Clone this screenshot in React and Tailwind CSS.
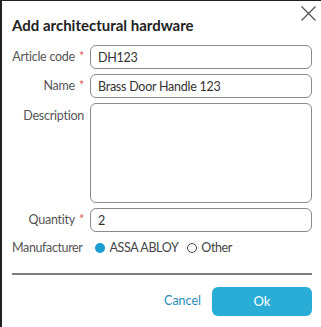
import React, { useState } from 'react'

const FONT = { fontFamily: 'Lato, "Open Sans", sans-serif' }

function Field({ label, required, children, top }) {
  return (
    <div className={`flex ${top ? 'items-start' : 'items-center'} gap-[6px]`}>
      <label
        className={`w-[72px] shrink-0 text-right text-[12.5px] tracking-[-0.02em] text-[#555] whitespace-nowrap ${top ? 'pt-[4px]' : ''}`}
      >
        {label}
        {required && <span className="text-[#e05a5a] ml-[4px]">*</span>}
      </label>
      {children}
    </div>
  )
}

export default function App() {
  const [maker, setMaker] = useState('assa')

  const inputCls =
    'flex-1 min-w-0 h-[24px] border border-[#8a8a8a] rounded-[6px] px-[7px] text-[12.5px] tracking-[-0.02em] text-[#333] outline-none'

  return (
    <div
      className="w-[321px] h-[327px] bg-white border-l-2 border-t border-[#222] pl-[10px] pr-[9px] overflow-hidden"
      style={FONT}
    >
      {/* Header */}
      <div className="flex items-start justify-between h-[44px]">
        <h1 className="mt-[14px] text-[15px] font-bold text-[#222] leading-[20px]">
          Add architectural hardware
        </h1>
        <button className="mt-[4px] -mr-[5px] text-[#555]">
          <svg width="17" height="17" viewBox="0 0 17 17" fill="none" stroke="currentColor" strokeWidth="1.3">
            <path d="M1.5 1.5 L15.5 15.5 M15.5 1.5 L1.5 15.5" />
          </svg>
        </button>
      </div>

      {/* Form */}
      <div className="flex flex-col gap-[5px]">
        <Field label="Article code" required>
          <input defaultValue="DH123" className={inputCls} />
        </Field>
        <Field label="Name" required>
          <input defaultValue="Brass Door Handle 123" className={inputCls} />
        </Field>
        <Field label="Description" top>
          <textarea className="flex-1 min-w-0 h-[100px] border border-[#8a8a8a] rounded-[6px] px-[7px] text-[12.5px] resize-none outline-none" />
        </Field>
        <Field label="Quantity" required>
          <input defaultValue="2" className={inputCls} />
        </Field>
      </div>

      {/* Manufacturer */}
      <div className="flex items-center mt-[6px] h-[20px] text-[12.5px] tracking-[-0.03em] text-[#444]">
        <span className="mr-[12px] text-[#555]">Manufacturer</span>
        <button className="flex items-center gap-[5px] mr-[9px]" onClick={() => setMaker('assa')}>
          <span
            className={`w-[10px] h-[10px] rounded-full ${maker === 'assa' ? 'bg-[#1a9fd0]' : 'border border-[#444]'}`}
          />
          ASSA ABLOY
        </button>
        <button className="flex items-center gap-[4px]" onClick={() => setMaker('other')}>
          <span
            className={`w-[10px] h-[10px] rounded-full ${maker === 'other' ? 'bg-[#1a9fd0]' : 'border border-[#444]'}`}
          />
          Other
        </button>
      </div>

      <div className="mt-[15px] h-[2px] bg-[#7d7d7d]" />

      {/* Footer */}
      <div className="flex items-center justify-end gap-[11px] mt-[12px]">
        <button className="text-[12.5px] text-[#2a8db5]">Cancel</button>
        <button className="w-[100px] h-[29px] rounded-[6px] bg-[#29acd6] text-white text-[13px]">
          Ok
        </button>
      </div>
    </div>
  )
}
